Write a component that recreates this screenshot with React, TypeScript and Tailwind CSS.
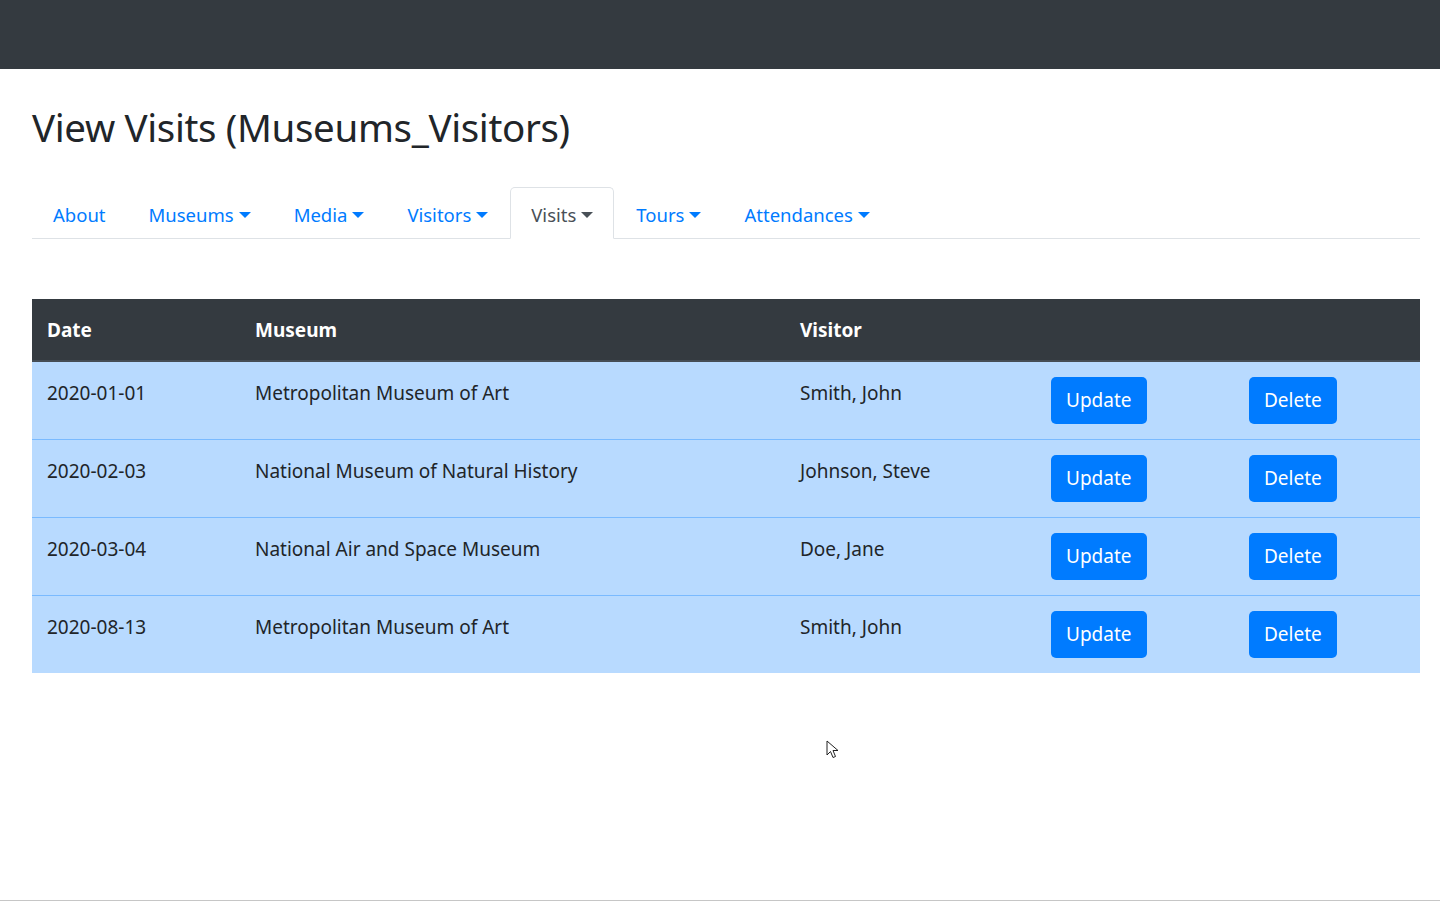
import { Fragment } from 'react';

const visits = [
    { date: '2020-01-01', museum: 'Metropolitan Museum of Art', visitor: 'Smith, John' },
    { date: '2020-02-03', museum: 'National Museum of Natural History', visitor: 'Johnson, Steve' },
    { date: '2020-03-04', museum: 'National Air and Space Museum', visitor: 'Doe, Jane' },
    { date: '2020-08-13', museum: 'Metropolitan Museum of Art', visitor: 'Smith, John' },
];

const tabs = [
    { label: 'About', caret: false },
    { label: 'Museums', caret: true },
    { label: 'Media', caret: true },
    { label: 'Visitors', caret: true },
    { label: 'Visits', caret: true, active: true },
    { label: 'Tours', caret: true },
    { label: 'Attendances', caret: true },
];

function Caret() {
    return (
        <span className="ml-[5px] inline-block align-[3px] border-x-[6px] border-t-[6px] border-x-transparent border-t-current" />
    );
}

export default function App() {
    return (
        <div className="relative h-[901px] overflow-hidden border-b border-[#c6c6c6] bg-white text-[#212529] font-['Noto_Sans',sans-serif] text-[19px]">
            {/* Navbar */}
            <div className="h-[69px] bg-[#343a40]" />

            <div className="pl-8 pr-5">
                <h1 className="mt-[35px] text-[38.5px] leading-[1.2] font-normal tracking-[-0.35px]">
                    View Visits (Museums_Visitors)
                </h1>

                {/* Tabs */}
                <div className="mt-[37px] flex border-b border-[#dee2e6] text-[18.5px]">
                    {tabs.map((tab) => (
                        <Fragment key={tab.label}>
                            <div
                                className={`-mb-px mr-px flex h-[52px] items-center rounded-t-[5px] border px-5 pt-1 ${tab.active
                                    ? 'border-[#dee2e6] border-b-white bg-white text-[#495057]'
                                    : 'border-transparent text-[#007bff]'
                                    }`}
                            >
                                {tab.label}
                                {tab.caret && <Caret />}
                            </div>
                        </Fragment>
                    ))}
                </div>

                {/* Table */}
                <table className="mt-[60px] w-full border-collapse text-left">
                    <thead className="bg-[#343a40] text-white">
                        <tr>
                            <th className="w-[208px] h-[62px] border-b-2 border-[#454d55] px-[15px] pt-[2px] font-bold">Date</th>
                            <th className="w-[545px] border-b-2 border-[#454d55] px-[15px] pt-[2px] font-bold">Museum</th>
                            <th className="w-[251px] border-b-2 border-[#454d55] px-[15px] pt-[2px] font-bold">Visitor</th>
                            <th className="w-[198px] border-b-2 border-[#454d55] px-[15px]"></th>
                            <th className="border-b-2 border-[#454d55] px-[15px]"></th>
                        </tr>
                    </thead>
                    <tbody className="bg-[#b8daff]">
                        {visits.map((v, i) => (
                            <tr key={i} className={i < visits.length - 1 ? 'border-b border-[#7abaff]' : ''}>
                                <td className="h-[78px] px-[15px] pt-[16px] align-top leading-[30px]">{v.date}</td>
                                <td className="px-[15px] pt-[16px] align-top leading-[30px]">{v.museum}</td>
                                <td className="px-[15px] pt-[16px] align-top leading-[30px]">{v.visitor}</td>
                                <td className="px-[15px] pt-[15px] align-top">
                                    <button className="h-[47px] rounded-[5px] bg-[#007bff] px-[15px] text-white">Update</button>
                                </td>
                                <td className="px-[15px] pt-[15px] align-top">
                                    <button className="h-[47px] rounded-[5px] bg-[#007bff] px-[15px] text-white">Delete</button>
                                </td>
                            </tr>
                        ))}
                    </tbody>
                </table>
            </div>

            {/* Mouse pointer */}
            <svg className="absolute left-[826px] top-[740px]" width="14" height="20" viewBox="0 0 14 20">
                <path d="M1 1 L1 15 L4.5 11.5 L7 17.5 L9.5 16.5 L7 10.5 L12 10.5 Z" fill="white" stroke="#222" strokeWidth="1" strokeLinejoin="round" />
            </svg>
        </div>
    );
}
